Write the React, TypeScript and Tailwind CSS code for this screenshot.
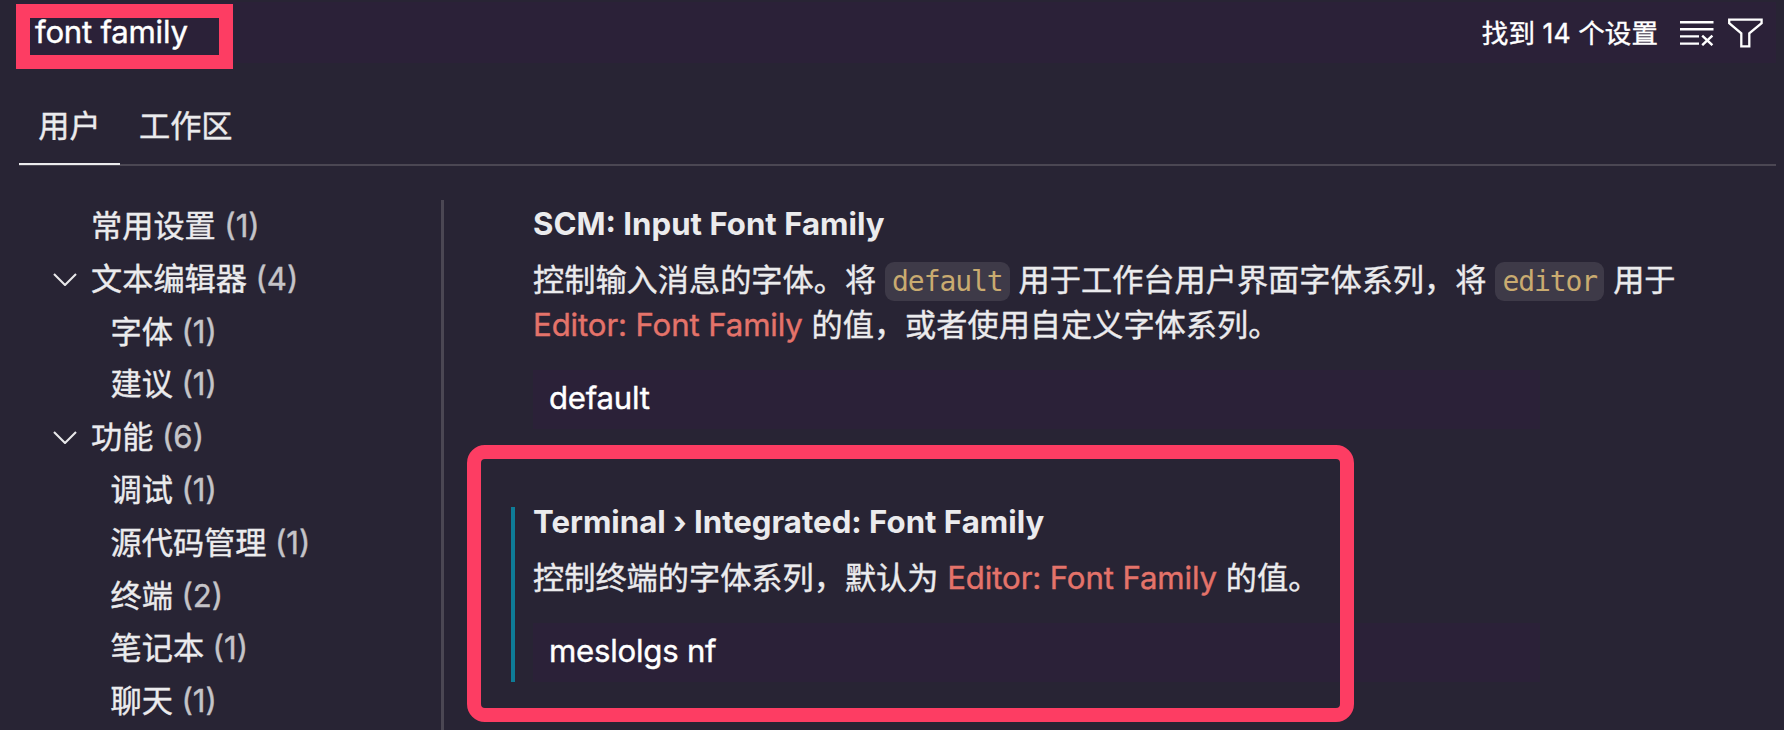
import type { ReactNode } from "react";

interface TocItem {
  count: number;
  expanded?: boolean;
  label: string;
  level: 0 | 1;
}

const TOC_ITEMS: TocItem[] = [
  { count: 1, label: "常用设置", level: 0 },
  { count: 4, expanded: true, label: "文本编辑器", level: 0 },
  { count: 1, label: "字体", level: 1 },
  { count: 1, label: "建议", level: 1 },
  { count: 6, expanded: true, label: "功能", level: 0 },
  { count: 1, label: "调试", level: 1 },
  { count: 1, label: "源代码管理", level: 1 },
  { count: 2, label: "终端", level: 1 },
  { count: 1, label: "笔记本", level: 1 },
  { count: 1, label: "聊天", level: 1 },
];

const ChevronDownIcon = () => (
  <svg className="h-[13px] w-6" fill="none" viewBox="0 0 24 13">
    <path d="M1 1l11 11L23 1" stroke="#e8e8ea" strokeWidth="2.1" />
  </svg>
);

const ClearAllIcon = () => (
  <svg className="h-[27px] w-[34px]" fill="none" viewBox="0 0 34 27">
    <path
      d="M0 3.2h33.5M0 10.3h33.5M0 17.4h19M0 24.6h19M22.2 16.6l10.2 9.6M32.4 16.6l-10.2 9.6"
      stroke="#fff"
      strokeWidth="2.4"
    />
  </svg>
);

const FilterIcon = () => (
  <svg className="h-[30px] w-[35px]" fill="none" viewBox="0 0 35 30">
    <path
      d="M1.2 1.6h32.4v3.6L21.3 15.4v12.9h-8V15.4L1.2 5.2z"
      stroke="#fff"
      strokeWidth="2.3"
    />
  </svg>
);

const Code = ({ children }: { children: ReactNode }) => (
  <code className="rounded-[9px] bg-[#3e3a48] px-[7.2px] py-[3px] font-['DejaVu_Sans_Mono',monospace] text-[28px] tracking-[-1.06px] text-[#c9ab70] [-webkit-text-stroke:0]">
    {children}
  </code>
);

const SettingLink = ({ children }: { children: ReactNode }) => (
  <a className="tracking-[-0.12px] text-[#e4736a]">{children}</a>
);

interface SettingProps {
  children: ReactNode;
  modified?: boolean;
  title: string;
  value: string;
}

const Setting = ({ children, modified, title, value }: SettingProps) => (
  <section className="relative">
    {modified && (
      <span className="absolute top-[6px] bottom-0 left-[-22px] w-1 bg-[#0e7c97]" />
    )}
    <h3 className="leading-[43.68px] font-bold whitespace-pre [-webkit-text-stroke:0]">
      {title}
    </h3>
    <p className="mt-[12.5px] leading-[43.68px] whitespace-nowrap">
      {children}
    </p>
    <div className="mt-[22.5px] h-[59px] w-[1007px] bg-[#2b2138] px-4 leading-[57px] tracking-[-0.25px] text-white">
      {value}
    </div>
  </section>
);

export default function App() {
  return (
    <div className="relative flex h-[730px] w-[1784px] flex-col overflow-hidden bg-[#282434] font-['Inter','Noto_Sans_CJK_SC',sans-serif] text-[31.2px] text-[#ebebed] [-webkit-text-stroke:0.4px]">
      <header className="mt-[2px] mr-2 ml-[19px] flex h-[61px] items-center bg-[#2b2138] pr-[13px] pl-4 text-white">
        <span className="flex-1 leading-[61px] tracking-[-0.25px]">
          font family
        </span>
        <span className="text-[26.5px] leading-[66px] tracking-[0.1px]">
          找到 14 个设置
        </span>
        <span className="ml-[22px] flex items-center gap-[14px]">
          <ClearAllIcon />
          <FilterIcon />
        </span>
      </header>

      <nav className="mt-[32px] mr-2 ml-[19px] flex h-[71px] border-b-2 border-[#4b4753] leading-[62px]">
        <span className="h-[70px] border-b-2 border-[#ebebed] px-[19.2px]">
          用户
        </span>
        <span className="px-[19.2px]">工作区</span>
      </nav>

      <main className="flex flex-1">
        <aside className="mt-[34px] w-[441px] shrink-0">
          {TOC_ITEMS.map(({ count, expanded, label, level }) => (
            <div
              className="flex h-[52.8px] items-center leading-[52.8px] whitespace-nowrap"
              key={label}
            >
              <span
                className={`flex shrink-0 pl-[52.5px] ${
                  level === 0 ? "w-[91px]" : "w-[110.5px]"
                }`}
              >
                {expanded && <ChevronDownIcon />}
              </span>
              {label}
              <span className="ml-[8.5px] text-[#c5c4c8]">({count})</span>
            </div>
          ))}
        </aside>
        <div className="mt-[34px] w-[3px] bg-[#4b4753]" />
        <div className="mt-[37px] ml-[89px] flex flex-col gap-[72px]">
          <Setting title="SCM: Input Font Family" value="default">
            控制输入消息的字体。将 <Code>default</Code>{" "}
            用于工作台用户界面字体系列，将 <Code>editor</Code> 用于
            <br />
            <SettingLink>Editor: Font Family</SettingLink>{" "}
            的值，或者使用自定义字体系列。
          </Setting>
          <Setting
            modified
            title="Terminal › Integrated: Font Family"
            value="meslolgs nf"
          >
            控制终端的字体系列，默认为{" "}
            <SettingLink>Editor: Font Family</SettingLink> 的值。
          </Setting>
        </div>
      </main>

      {/* annotation frames */}
      <div className="absolute top-1 left-4 h-[65px] w-[217px] border-14 border-[#fd3d63]" />
      <div className="absolute top-[445px] left-[467px] h-[277px] w-[887px] rounded-[18px] border-14 border-[#fd3d63]" />
    </div>
  );
}
